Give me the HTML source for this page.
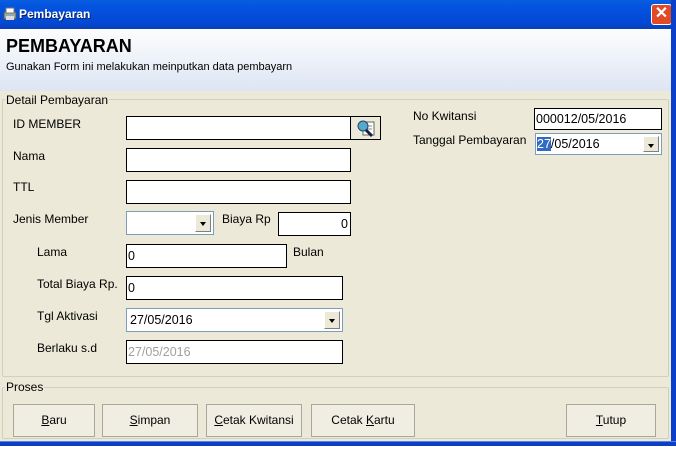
<!DOCTYPE html>
<html><head><style>
*{margin:0;padding:0;box-sizing:border-box}
body{width:676px;height:450px;overflow:hidden;background:#fff;font-family:"Liberation Sans",sans-serif;font-size:12px;color:#000;position:relative}
.a{position:absolute}
.title{left:0;top:0;width:676px;height:29px;background:linear-gradient(#0a5fe0,#0454e0 20%,#0348d4 80%,#0a3fb8)}
.hdr{left:0;top:29px;width:672px;height:62px;background:linear-gradient(#fdfdfe,#dde5f3)}
.body{left:0;top:91px;width:672px;height:353px;background:#ece9d8}
.rb{left:671px;top:0;width:5px;height:446px;background:#0a3fcc}
.bb{left:0;top:441px;width:676px;height:5px;background:#0b3fc8;border-top:1px solid #5a7fe0}
.lbl{font-size:12px;white-space:nowrap}
.tb{background:#fff;border:1px solid #000;height:24px;line-height:22px;padding-left:1px;font-size:12.5px}
.dd{position:absolute;right:2px;top:2px;width:16px;height:18px;background:#ece9d8;border:1px solid;border-color:#fff #808080 #808080 #fff;}
.dd:after{content:"";position:absolute;left:4px;top:7px;border:3.5px solid transparent;border-top:4px solid #000}
.grp{border:1px solid #d0d0bf;border-radius:2px}
.gl{background:#ece9d8;font-size:12px;padding:0 1px}
.btn{border:1px solid #a8a89a;background:#f0eee2;font-size:12px;text-align:center;line-height:31px;height:33px}
</style></head><body>
<div class="a title"></div>
<svg class="a" style="left:2px;top:6px" width="16" height="16"><rect x="2" y="6" width="12" height="7" fill="#9aa" stroke="#555"/><rect x="4" y="2" width="8" height="5" fill="#fff" stroke="#777"/><rect x="4" y="10" width="8" height="4" fill="#ddd"/></svg>
<div class="a" style="left:19px;top:7px;color:#fff;font-weight:bold;font-size:12px;text-shadow:1px 1px #0a246a">Pembayaran</div>
<div class="a" style="left:651px;top:4px;width:21px;height:21px;background:#e04a25;border:1px solid #fff;border-radius:3px;color:#fff;font-size:16px;font-weight:bold;text-align:center;line-height:18px">✕</div>
<div class="a hdr"></div>
<div class="a" style="left:6px;top:36px;font-size:18px;font-weight:bold">PEMBAYARAN</div>
<div class="a" style="left:6px;top:61px;font-size:11px">Gunakan Form ini melakukan meinputkan data pembayarn</div>
<div class="a body"></div>
<div class="a rb"></div>
<div class="a grp" style="left:2px;top:99px;width:667px;height:278px"></div>
<div class="a gl" style="left:5px;top:93px">Detail Pembayaran</div>
<div class="a grp" style="left:2px;top:387px;width:667px;height:52px"></div>
<div class="a gl" style="left:5px;top:380px">Proses</div>

<div class="a lbl" style="left:13px;top:117px">ID MEMBER</div>
<div class="a tb" style="left:126px;top:116px;width:225px"></div>
<div class="a" style="left:350px;top:116px;width:31px;height:24px;background:#ece9d8;border:1px solid #000"></div>
<svg class="a" style="left:355px;top:118px" width="22" height="20"><rect x="8" y="4" width="11" height="13" fill="#fff" stroke="#666"/><line x1="10" y1="8" x2="17" y2="8" stroke="#888"/><line x1="10" y1="11" x2="17" y2="11" stroke="#888"/><circle cx="8" cy="8" r="5" fill="#5ac" stroke="#246"/><line x1="11" y1="12" x2="17" y2="18" stroke="#124" stroke-width="3"/></svg>
<div class="a lbl" style="left:13px;top:149px">Nama</div>
<div class="a tb" style="left:126px;top:148px;width:225px"></div>
<div class="a lbl" style="left:13px;top:180px">TTL</div>
<div class="a tb" style="left:126px;top:180px;width:225px"></div>
<div class="a lbl" style="left:13px;top:212px">Jenis Member</div>
<div class="a tb" style="left:126px;top:211px;width:88px;border-color:#7f9db9"><div class="dd"></div></div>
<div class="a lbl" style="left:222px;top:212px">Biaya Rp</div>
<div class="a tb" style="left:278px;top:212px;width:73px;text-align:right;padding-right:2px">0</div>
<div class="a lbl" style="left:37px;top:245px">Lama</div>
<div class="a tb" style="left:126px;top:244px;width:161px">0</div>
<div class="a lbl" style="left:293px;top:245px">Bulan</div>
<div class="a lbl" style="left:37px;top:277px">Total Biaya Rp.</div>
<div class="a tb" style="left:126px;top:276px;width:217px">0</div>
<div class="a lbl" style="left:37px;top:309px">Tgl Aktivasi</div>
<div class="a tb" style="left:126px;top:308px;width:217px;border-color:#7f9db9;padding-left:3px">27/05/2016<div class="dd"></div></div>
<div class="a lbl" style="left:37px;top:341px">Berlaku s.d</div>
<div class="a tb" style="left:126px;top:340px;width:217px;color:#a0a0a0">27/05/2016</div>

<div class="a lbl" style="left:413px;top:109px">No Kwitansi</div>
<div class="a tb" style="left:534px;top:108px;width:128px;height:22px;line-height:20px">000012/05/2016</div>
<div class="a lbl" style="left:413px;top:133px">Tanggal Pembayaran</div>
<div class="a tb" style="left:535px;top:133px;width:127px;height:22px;line-height:20px;border-color:#7f9db9"><span style="background:#316ac5;color:#fff">27</span>/05/2016<div class="dd" style="height:16px;top:2px"></div></div>

<div class="a btn" style="left:13px;top:404px;width:82px"><u>B</u>aru</div>
<div class="a btn" style="left:102px;top:404px;width:96px"><u>S</u>impan</div>
<div class="a btn" style="left:206px;top:404px;width:96px"><u>C</u>etak Kwitansi</div>
<div class="a btn" style="left:311px;top:404px;width:104px">Cetak <u>K</u>artu</div>
<div class="a btn" style="left:566px;top:404px;width:90px"><u>T</u>utup</div>
<div class="a bb"></div>
</body></html>
